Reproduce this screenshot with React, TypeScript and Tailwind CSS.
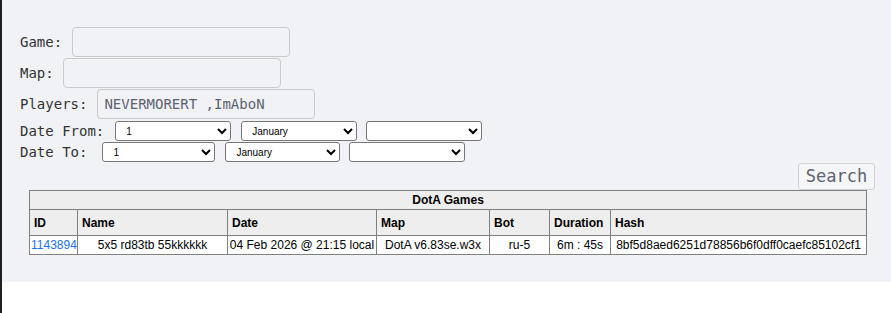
const days = Array.from({ length: 31 }, (_, i) => String(i + 1));
const months = [
  "January", "February", "March", "April", "May", "June",
  "July", "August", "September", "October", "November", "December",
];

function DateRow({ label, gap, widths }: { label: string; gap: string; widths: [string, string, string] }) {
  return (
    <div className="flex h-[20px] items-center pl-[18px]">
      <span className={`${gap} whitespace-pre`}>{label}</span>
      <select className={`${widths[0]} h-[20px] rounded-[3px] border border-[#767676] bg-white pl-[6px] font-['Liberation_Sans',Arial,sans-serif] text-[10px] text-black`}>
        {days.map((d) => (
          <option key={d}>{d}</option>
        ))}
      </select>
      <select className={`${widths[1]} ml-[10px] h-[20px] rounded-[3px] border border-[#767676] bg-white pl-[6px] font-['Liberation_Sans',Arial,sans-serif] text-[10px] text-black`}>
        {months.map((m) => (
          <option key={m}>{m}</option>
        ))}
      </select>
      <select className={`${widths[2]} ml-[9px] h-[20px] rounded-[3px] border border-[#767676] bg-white pl-[6px] font-['Liberation_Sans',Arial,sans-serif] text-[10px] text-black`}>
        <option></option>
      </select>
    </div>
  );
}

function Field({ label, gap, value }: { label: string; gap: string; value?: string }) {
  return (
    <div className="flex h-[30px] items-center pl-[18px]">
      <span className={gap}>{label}</span>
      <input
        readOnly
        value={value ?? ""}
        className="h-[30px] w-[218px] rounded-[4px] border border-[#cacaca] bg-transparent px-[6px] text-[14px] text-[#5c6370] outline-none"
      />
    </div>
  );
}

const headers = ["ID", "Name", "Date", "Map", "Bot", "Duration", "Hash"];
const widths = [48, 150, 149, 113, 60, 61, 256];

export default function App() {
  return (
    <div className="flex min-h-[313px] bg-white">
      <div className="w-[2px] shrink-0 bg-[#1f2026]" />
      <div className="flex-1">
        <div className="h-[282px] bg-[#f1f2f6] pt-[27px] font-['DejaVu_Sans_Mono',monospace] text-[14px] text-[#333]">
          <div className="flex flex-col gap-[1px]">
            <Field label="Game:" gap="mr-[10px]" />
            <Field label="Map:" gap="mr-[9px]" />
            <Field label="Players:" gap="mr-[10px]" value="NEVERMORERT ,ImAboN" />
          </div>
          <div className="mt-[2px] flex flex-col gap-[1px]">
            <DateRow label="Date From:" gap="mr-[11px]" widths={["w-[116px]", "w-[116px]", "w-[116px]"]} />
            <DateRow label="Date To:" gap="mr-[15px]" widths={["w-[113px]", "w-[115px]", "w-[116px]"]} />
          </div>
          <div className="mt-[1px] flex justify-end pr-[16px]">
            <button className="h-[27px] w-[77px] rounded-[3px] border border-[#cfd1d4] bg-[#f5f6f8] text-[17px] text-[#5c6370]">
              Search
            </button>
          </div>
          <table className="ml-[27px] w-[837px] table-fixed border-collapse font-['Liberation_Sans',Arial,sans-serif] text-[12px] text-black">
            <colgroup>
              {widths.map((w, i) => (
                <col key={i} style={{ width: w }} />
              ))}
            </colgroup>
            <tbody>
              <tr className="h-[19px] bg-[#eeeeee]">
                <td colSpan={7} className="border border-[#808080] text-center font-bold">
                  DotA Games
                </td>
              </tr>
              <tr className="h-[26px] bg-[#eeeeee]">
                {headers.map((h) => (
                  <th key={h} className="border border-[#808080] px-[4px] text-left font-bold">
                    {h}
                  </th>
                ))}
              </tr>
              <tr className="h-[19px] bg-white text-center whitespace-nowrap">
                <td className="border border-[#808080] px-[1px] text-[#1a73e8]">1143894</td>
                <td className="border border-[#808080]">5x5 rd83tb 55kkkkkk</td>
                <td className="border border-[#808080]">04 Feb 2026 @ 21:15 local</td>
                <td className="border border-[#808080]">DotA v6.83se.w3x</td>
                <td className="border border-[#808080]">ru-5</td>
                <td className="border border-[#808080]">6m : 45s</td>
                <td className="border border-[#808080]">8bf5d8aed6251d78856b6f0dff0caefc85102cf1</td>
              </tr>
            </tbody>
          </table>
        </div>
      </div>
    </div>
  );
}
